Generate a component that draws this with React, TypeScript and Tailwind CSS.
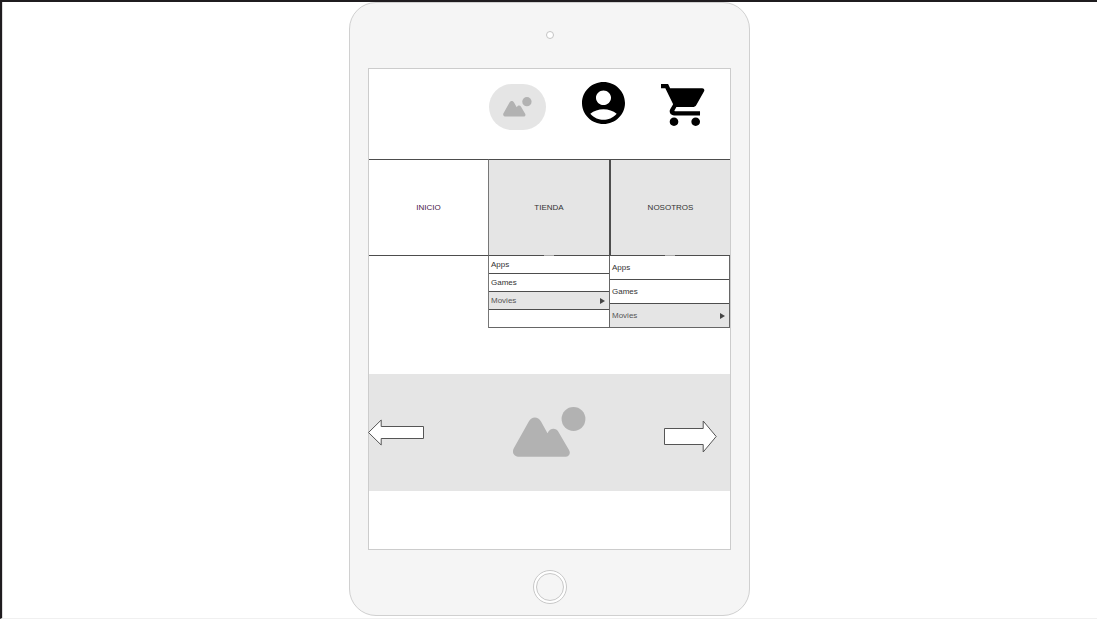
import React from "react";

function PictureIcon({ className }: { className: string }) {
  return (
    <svg viewBox="0 0 73 51" className={className} fill="#b2b2b2" aria-hidden="true">
      <circle cx="60.5" cy="12" r="11.9" />
      <path d="M6.500 49.800C1 49.800-1.500 45.500 0.800 41.300L15.800 14.500C18.700 9 25 9 28 14.500L34.500 26.200C37 20.600 43 20.400 45.500 25L56 43C58 46.500 56.200 49.800 52.500 49.800Z" />
    </svg>
  );
}

function AccountIcon() {
  return (
    <svg viewBox="2 2 20 20" preserveAspectRatio="none" className="h-[42px] w-[43px]" aria-hidden="true">
      <path d="M12 2C6.480 2 2 6.480 2 12s4.480 10 10 10 10-4.480 10-10S17.520 2 12 2zm0 4c1.930 0 3.500 1.570 3.500 3.500S13.930 13 12 13s-3.500-1.570-3.500-3.500S10.070 6 12 6zm0 14c-2.030 0-4.430-.820-6.140-2.880C7.550 15.800 9.680 15 12 15s4.450.800 6.140 2.120C16.430 19.180 14.030 20 12 20z" />
    </svg>
  );
}

function CartIcon() {
  return (
    <svg viewBox="1 2 20.300 20" preserveAspectRatio="none" className="h-[42px] w-11" aria-hidden="true">
      <path d="M7 18c-1.100 0-1.990.900-1.990 2S5.900 22 7 22s2-.900 2-2-.900-2-2-2zM1 2v2h2l3.600 7.590-1.350 2.450c-.160.280-.250.610-.250.960 0 1.100.900 2 2 2h12v-2H7.420c-.140 0-.250-.110-.250-.250l.030-.120.900-1.630h7.450c.750 0 1.410-.410 1.750-1.030l3.580-6.490c.080-.140.120-.310.120-.480 0-.550-.450-1-1-1H5.210l-.940-2H1zm16 16c-1.100 0-1.990.900-1.990 2s.890 2 1.990 2 2-.900 2-2-.900-2-2-2z" />
    </svg>
  );
}

function Caret() {
  return (
    <svg viewBox="0 0 5 6" className="h-1.5 w-[5px]" fill="#444" aria-hidden="true">
      <path d="M0 0L5 3L0 6Z" />
    </svg>
  );
}

function NavTab({ label, className = "" }: { label: string; className?: string }) {
  return (
    <a href="#" className={`flex h-[97px] items-center justify-center border-y border-[#4d4d4d] ${className}`}>
      {label}
    </a>
  );
}

function Handle() {
  return <span className="absolute bottom-0 left-1/2 h-px w-2.5 -translate-x-1/2 bg-[#aaa]" />;
}

export default function App() {
  return (
    <div className="flex min-h-screen justify-center border-t-2 border-b border-l-2 border-t-[#1f1c1f] border-b-[#f0f0f0] border-l-[#1f1c1f] bg-white font-['Liberation_Sans',Arial,sans-serif] text-[8px] leading-3 text-[#333] shadow-[inset_1px_0_0_#ddd]">
      <div className="w-full max-w-[401px] self-start rounded-[27px] border border-[#d0d0d0] bg-[#f5f5f5] px-[18px]">
        <div className="flex h-[65px] items-center justify-center pb-0.5">
          <span className="size-2 rounded-full border border-[#c4c4c4] bg-white" />
        </div>

        <main className="flex flex-col border border-[#ccc] bg-white">
          <header className="flex h-[90px] justify-end gap-9 pt-[13px] pr-[25px]">
            <div className="mt-0.5 flex h-[46px] w-[57px] items-center justify-center self-start rounded-[23px] bg-[#e5e5e5]">
              <PictureIcon className="h-5 w-[29px]" />
            </div>
            <button type="button" aria-label="Cuenta" className="self-start">
              <AccountIcon />
            </button>
            <button type="button" aria-label="Carrito" className="mt-0.5 self-start">
              <CartIcon />
            </button>
          </header>

          <nav className="grid grid-cols-[119fr_121fr_121fr]">
            <NavTab label="INICIO" className="text-[#4a2048]" />
            <div className="relative">
              <NavTab label="TIENDA" className="border-l border-l-[#777] bg-[#e5e5e5]" />
              <Handle />
            </div>
            <div className="relative">
              <NavTab label="NOSOTROS" className="border-l-2 bg-[#e5e5e5]" />
              <Handle />
            </div>

            <ul className="col-start-2 grid h-[72px] grid-rows-4 border-l border-[#777]">
              <li className="flex items-center border-b border-[#4d4d4d] pl-0.5"><a href="#">Apps</a></li>
              <li className="flex items-center border-b border-[#4d4d4d] pl-0.5"><a href="#">Games</a></li>
              <li className="flex items-center justify-between border-b border-[#4d4d4d] bg-[#e5e5e5] pr-1 pl-0.5 text-[#555]">
                <a href="#">Movies</a>
                <Caret />
              </li>
              <li className="border-b border-[#666]" />
            </ul>
            <ul className="grid h-[72px] grid-rows-3 border-x border-[#666]">
              <li className="flex items-center border-b border-[#4d4d4d] pl-0.5"><a href="#">Apps</a></li>
              <li className="flex items-center border-b border-[#4d4d4d] pl-0.5"><a href="#">Games</a></li>
              <li className="flex items-center justify-between border-b border-[#666] bg-[#e5e5e5] pr-1 pl-0.5 text-[#555]">
                <a href="#">Movies</a>
                <Caret />
              </li>
            </ul>
          </nav>

          <section className="mt-[46px] mb-[58px] grid h-[117px] grid-cols-[1fr_auto_1fr] items-center bg-[#e5e5e5]">
            <button type="button" aria-label="Anterior" className="-ml-px justify-self-start">
              <svg viewBox="0 0 56 27" className="h-[27px] w-14" fill="white" stroke="#555" aria-hidden="true">
                <path d="M0.500 13.500L13.200 1V7.500H55.500V19.500H13.200V26Z" />
              </svg>
            </button>
            <PictureIcon className="h-[51px] w-[73px]" />
            <button type="button" aria-label="Siguiente" className="justify-self-end pt-2 pr-[13px]">
              <svg viewBox="0 0 53 33" className="h-[33px] w-[53px]" fill="white" stroke="#555" aria-hidden="true">
                <path d="M0.500 8.500H39.200V1L52.200 16.500L39.200 32V24.500H0.500Z" />
              </svg>
            </button>
          </section>
        </main>

        <div className="flex justify-center pt-5 pb-[11px]">
          <button type="button" aria-label="Inicio" className="size-[34px] rounded-full border border-[#c8c8c8] bg-white p-0.5">
            <span className="block size-full rounded-full border border-[#c8c8c8] bg-[#f5f5f5]" />
          </button>
        </div>
      </div>
    </div>
  );
}
